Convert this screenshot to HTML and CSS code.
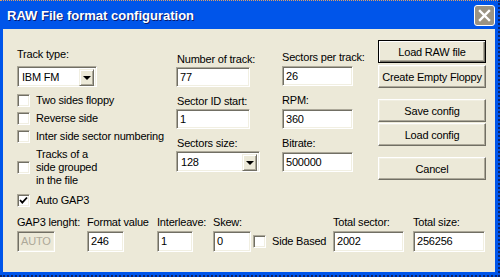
FILE: index.html
```html
<!DOCTYPE html>
<html lang="en">
<head>
<meta charset="UTF-8">
<title>RAW File format configuration</title>
<link rel="stylesheet" href="styles.css">
</head>
<body>
<div class="window">
  <div class="titlebar">
    <span class="title">RAW File format configuration</span>
    <span class="close">
      <svg width="13" height="13" viewBox="0 0 13 13"><path d="M2 2 L11 11 M11 2 L2 11" stroke="#fff" stroke-width="2.4" stroke-linecap="square"/></svg>
    </span>
  </div>

  <div class="client">
    <div class="top">
      <div class="col col1">
        <div class="lbl">Track type:</div>
        <div class="combo track-combo"><span class="val">IBM FM</span><span class="drop"><i class="arrow"></i></span></div>
        <label class="cb first"><span class="box"></span><span>Two sides floppy</span></label>
        <label class="cb"><span class="box"></span><span>Reverse side</span></label>
        <label class="cb"><span class="box"></span><span>Inter side sector numbering</span></label>
        <label class="cb multi"><span class="box"></span><span>Tracks of a<br>side grouped<br>in the file</span></label>
        <label class="cb auto"><span class="box"><svg width="9" height="9" viewBox="0 0 9 9"><polyline points="1,4 3.3,6.6 8,1.5" fill="none" stroke="#000" stroke-width="1.8"/></svg></span><span>Auto GAP3</span></label>
      </div>

      <div class="col col2">
        <div class="lbl">Number of track:</div>
        <div class="edit">77</div>
        <div class="lbl gap">Sector ID start:</div>
        <div class="edit">1</div>
        <div class="lbl gap">Sectors size:</div>
        <div class="combo size-combo"><span class="val">128</span><span class="drop"><i class="arrow"></i></span></div>
      </div>

      <div class="col col3">
        <div class="lbl">Sectors per track:</div>
        <div class="edit">26</div>
        <div class="lbl gap">RPM:</div>
        <div class="edit">360</div>
        <div class="lbl gap">Bitrate:</div>
        <div class="edit">500000</div>
      </div>

      <div class="col col4">
        <div class="btn default">Load RAW file</div>
        <div class="btn near">Create Empty Floppy</div>
        <div class="btn far">Save config</div>
        <div class="btn next">Load config</div>
        <div class="btn far">Cancel</div>
      </div>
    </div>

    <div class="bottom">
      <div class="lbl">GAP3 lenght:</div>
      <div class="lbl">Format value</div>
      <div class="lbl">Interleave:</div>
      <div class="lbl">Skew:</div>
      <div></div>
      <div class="lbl">Total sector:</div>
      <div class="lbl">Total size:</div>

      <div class="edit disabled w38">AUTO</div>
      <div class="edit w37">246</div>
      <div class="edit w36">1</div>
      <div class="edit w38">0</div>
      <label class="cb side"><span class="box"></span><span>Side Based</span></label>
      <div class="edit w71">2002</div>
      <div class="edit w72">256256</div>
    </div>
  </div>
</div>
</body>
</html>
```

FILE: styles.css
```css
* { box-sizing: border-box; }
body { margin: 0; font-family: "Liberation Sans", Arial, sans-serif; font-size: 11px; letter-spacing: -0.2px; color: #000; overflow: hidden; }

.window { width: 500px; height: 277px; background: #0055ea; border-top: 1px dotted #e0a064; border-right: 2px dotted #0a246a; border-bottom: 2px dotted #0a246a; }
.titlebar { height: 28px; display: flex; align-items: center; padding: 1px 3px 0 7px; }
.title { color: #fff; font-weight: bold; font-size: 13px; letter-spacing: 0; text-shadow: 1px 1px 0 #0a1a6e; }
.close { margin-left: auto; width: 21px; height: 21px; border: 1px solid #fff; border-radius: 3px; background: #9b9383; display: flex; align-items: center; justify-content: center; }

.client { margin-left: 3px; width: 492px; height: 243px; background: #ece9d8; }
.top { display: flex; height: 187px; }
.col { display: flex; flex-direction: column; }
.col1 { margin-left: 14px; width: 159px; padding-top: 19px; }
.col2 { width: 106px; padding-top: 24px; }
.col3 { width: 96px; padding-top: 22px; }
.col4 { width: 108px; padding-top: 11px; }

.lbl { height: 13px; line-height: 13px; white-space: nowrap; }
.col2 .lbl { padding-left: 1px; }
.col2 .edit { width: 74px; margin-top: 1px; }
.col3 .edit { width: 71px; margin-top: 2px; }
.col3 .lbl.gap { margin-top: 8px; }
.col2 .lbl.gap { margin-top: 8px; }

/* sunken edit */
.edit { height: 20px; border: 1px solid; border-color: #aca899 #fff #fff #aca899; box-shadow: inset 1px 1px 0 #716f64, inset -1px -1px 0 #f1efe2; background: #fff; padding-left: 3px; line-height: 18px; white-space: nowrap; }
.edit.disabled { background: #ece9d8; color: #aca899; }

.combo { display: flex; height: 21px; border: 1px solid; border-color: #aca899 #fff #fff #aca899; box-shadow: inset 1px 1px 0 #716f64, inset -1px -1px 0 #f1efe2; background: #fff; padding: 2px 2px 1px 2px; }
.combo .val { flex: 1; padding-left: 2px; line-height: 17px; }
.combo .drop { width: 15px; height: 17px; background: #ece9d8; border: 1px solid; border-color: #f1efe2 #716f64 #716f64 #f1efe2; box-shadow: inset 1px 1px 0 #fff, inset -1px -1px 0 #aca899; display: flex; align-items: center; justify-content: center; }
.arrow { width: 0; height: 0; border-left: 4px solid transparent; border-right: 4px solid transparent; border-top: 4px solid #000; margin-top: 1px; }
.track-combo { width: 80px; margin-top: 5px; }
.size-combo { width: 84px; margin-top: 1px; }

.cb { display: flex; align-items: center; gap: 6px; margin-top: 5px; line-height: 13px; white-space: nowrap; }
.cb.first { margin-top: 7px; }
.cb.auto { margin-top: 7px; }
.box { width: 13px; height: 13px; flex: none; border: 1px solid; border-color: #aca899 #fff #fff #aca899; box-shadow: inset 1px 1px 0 #716f64, inset -1px -1px 0 #f1efe2; background: #fff; display: flex; align-items: center; justify-content: center; }

.btn { height: 23px; display: flex; align-items: center; justify-content: center; background: #ece9d8; border: 1px solid; border-color: #fff #716f64 #716f64 #fff; box-shadow: inset -1px -1px 0 #aca899, inset 1px 1px 0 #f1efe2; white-space: nowrap; }
.btn.default { border-color: #000; box-shadow: inset 1px 1px 0 #fff, inset -1px -1px 0 #716f64, inset -2px -2px 0 #aca899; }
.btn.near { margin-top: 2px; }
.btn.far { margin-top: 11px; }
.btn.next { margin-top: 1px; }

.bottom { display: grid; grid-template-columns: 70px 70px 56px 40px 80px 80px 75px; grid-template-rows: 13px 21px; row-gap: 2px; padding-left: 14px; }
.bottom .edit { height: 21px; line-height: 19px; }
.w36 { width: 36px; } .w37 { width: 37px; } .w38 { width: 38px; } .w71 { width: 71px; } .w72 { width: 72px; }
.cb.side { margin-top: 0; }
```
